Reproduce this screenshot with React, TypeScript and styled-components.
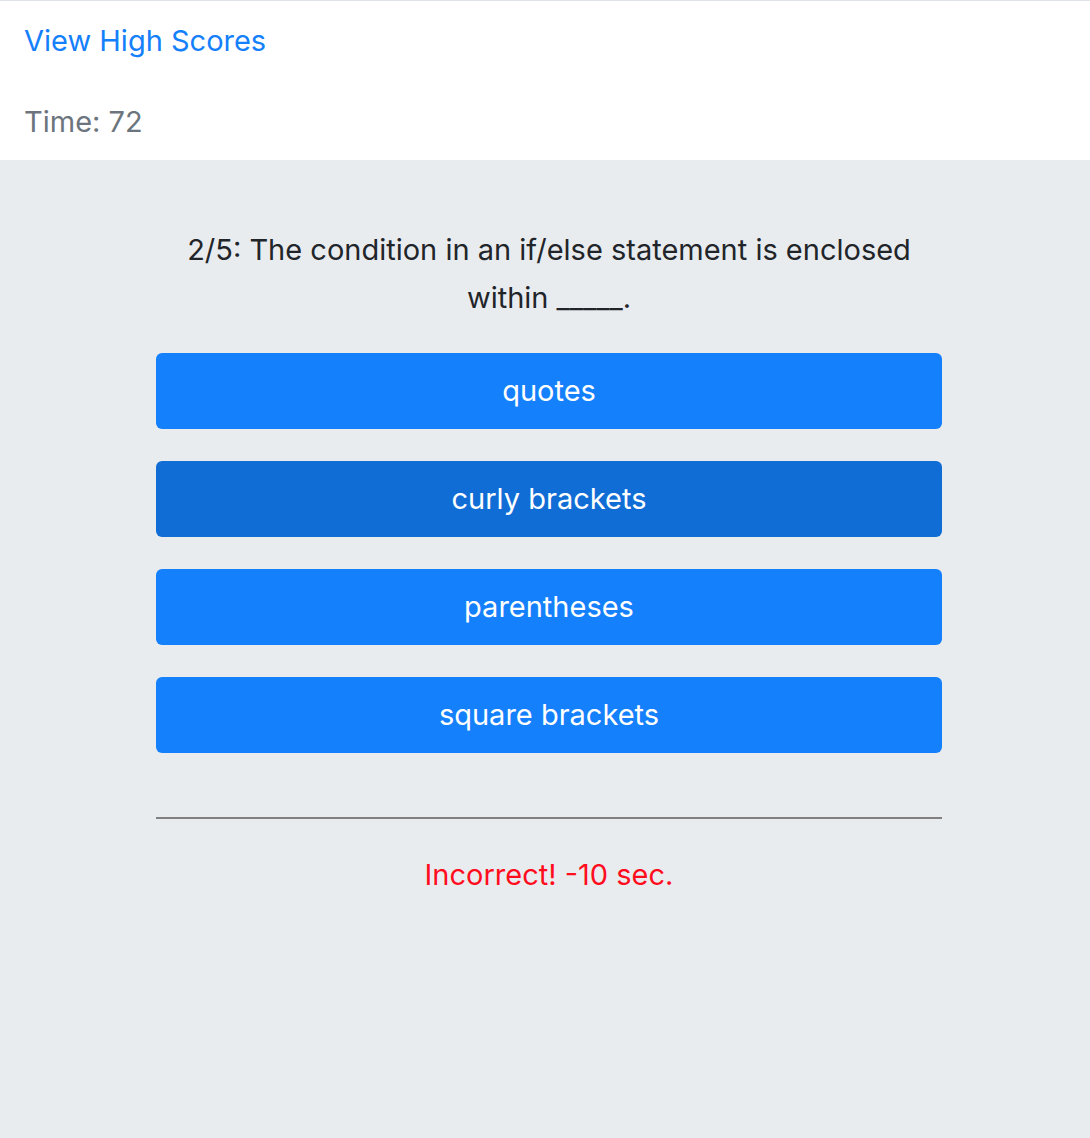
import styled, { createGlobalStyle } from "styled-components";

const GlobalStyle = createGlobalStyle`
  html, body {
    margin: 0;
    padding: 0;
    background: #e9ecef;
    font-family: Inter, "Noto Sans", "Liberation Sans", sans-serif;
  }
`;

const Header = styled.header`
  display: flex;
  flex-direction: column;
  gap: 33px;
  background: #ffffff;
  border-top: 1px solid #dee2e6;
  padding: 16px 24px 14px 24px;
`;

const HighScoresLink = styled.a`
  color: #1580fb;
  font-size: 29px;
  line-height: 48px;
  text-decoration: none;
  cursor: pointer;
`;

const Timer = styled.div`
  color: #6c757d;
  font-size: 29px;
  line-height: 48px;
`;

const Main = styled.main`
  display: flex;
  justify-content: center;
  padding: 66px 0 0 8px;
`;

const Quiz = styled.section`
  width: 786px;
  display: flex;
  flex-direction: column;
`;

const Question = styled.h2`
  margin: 0 0 31px 0;
  font-size: 29px;
  font-weight: 400;
  line-height: 48px;
  text-align: center;
  color: #212529;
`;

const Choices = styled.div`
  display: flex;
  flex-direction: column;
  gap: 32px;
`;

const ChoiceButton = styled.button<{ $active?: boolean }>`
  height: 76px;
  border: none;
  border-radius: 6px;
  background: ${(props) => (props.$active ? "#116dd6" : "#1580fb")};
  color: #ffffff;
  font-family: inherit;
  font-size: 29px;
  line-height: 48px;
  cursor: pointer;
`;

const Divider = styled.hr`
  margin: 64px 0 32px 0;
  border: none;
  border-top: 2px solid #808080;
`;

const Feedback = styled.p`
  margin: 0;
  text-align: center;
  font-size: 29px;
  line-height: 48px;
  color: #ff0d1d;
`;

const choices = ["quotes", "curly brackets", "parentheses", "square brackets"];

const App = () => {
  return (
    <>
      <GlobalStyle />
      <Header>
        <HighScoresLink>View High Scores</HighScoresLink>
        <Timer>Time: 72</Timer>
      </Header>
      <Main>
        <Quiz>
          <Question>
            2/5: The condition in an if/else statement is enclosed within _____.
          </Question>
          <Choices>
            {choices.map((choice) => (
              <ChoiceButton key={choice} $active={choice === "curly brackets"}>
                {choice}
              </ChoiceButton>
            ))}
          </Choices>
          <Divider />
          <Feedback>Incorrect! -10 sec.</Feedback>
        </Quiz>
      </Main>
    </>
  );
};

export default App;
